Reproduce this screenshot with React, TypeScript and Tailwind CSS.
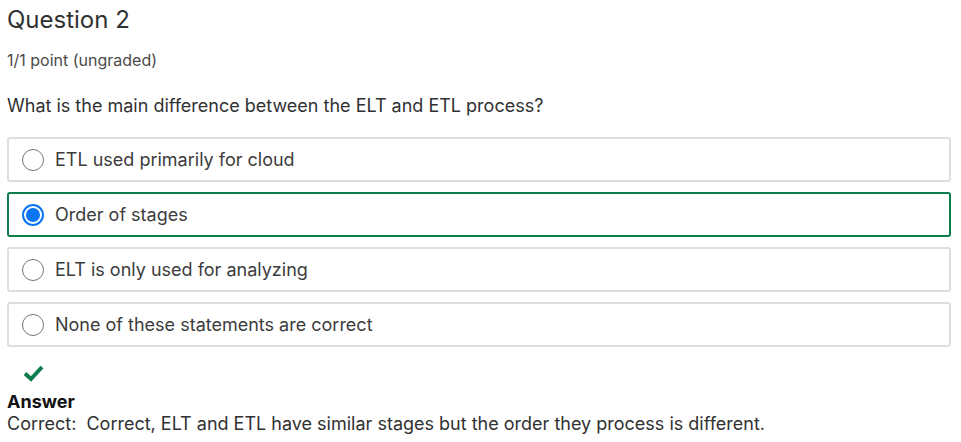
import React from 'react';

const options = [
  'ETL used primarily for cloud',
  'Order of stages',
  'ELT is only used for analyzing',
  'None of these statements are correct',
];

const selected = 1;

const App: React.FC = () => {
  return (
    <div className="min-h-[442px] bg-white px-[7px] font-['Inter',sans-serif] text-[#313131]">
      <h3 className="pt-[5px] text-[24px] leading-[30px] font-normal">Question 2</h3>
      <div className="mt-[14px] text-[16px] leading-[22px] text-[#4b4b4b]">1/1 point (ungraded)</div>
      <p className="mt-[23px] text-[18px] leading-[24px]">What is the main difference between the ELT and ETL process?</p>

      <div className="mt-[19px] flex w-[944px] flex-col gap-[10px]">
        {options.map((opt, i) => (
          <label
            key={opt}
            className={`flex h-[45px] items-center gap-[11px] rounded-[3px] border-2 px-[13px] text-[18px] ${
              i === selected ? 'border-[#0d7d4d]' : 'border-[#dedede]'
            }`}
          >
            {i === selected ? (
              <span className="flex h-[22px] w-[22px] items-center justify-center rounded-full border-2 border-[#0a75f5]">
                <span className="h-[14px] w-[14px] rounded-full bg-[#0a75f5]" />
              </span>
            ) : (
              <span className="h-[22px] w-[22px] rounded-full border border-[#767676]" />
            )}
            <span className="text-[#3c3c3c]">{opt}</span>
          </label>
        ))}
      </div>

      <div className="mt-[17px] pl-[16px]">
        <svg width="21" height="18" viewBox="0 0 21 18">
          <path d="M2 9.5 L8 15 L19 3" fill="none" stroke="#0d7d4d" strokeWidth="4" />
        </svg>
      </div>
      <div className="mt-[9px] text-[18px] leading-[22px] font-bold text-[#111]">Answer</div>
      <div className="text-[18px] leading-[22px] text-[#313131]">
        Correct:&nbsp; Correct, ELT and ETL have similar stages but the order they process is different.
      </div>
    </div>
  );
};

export default App;
